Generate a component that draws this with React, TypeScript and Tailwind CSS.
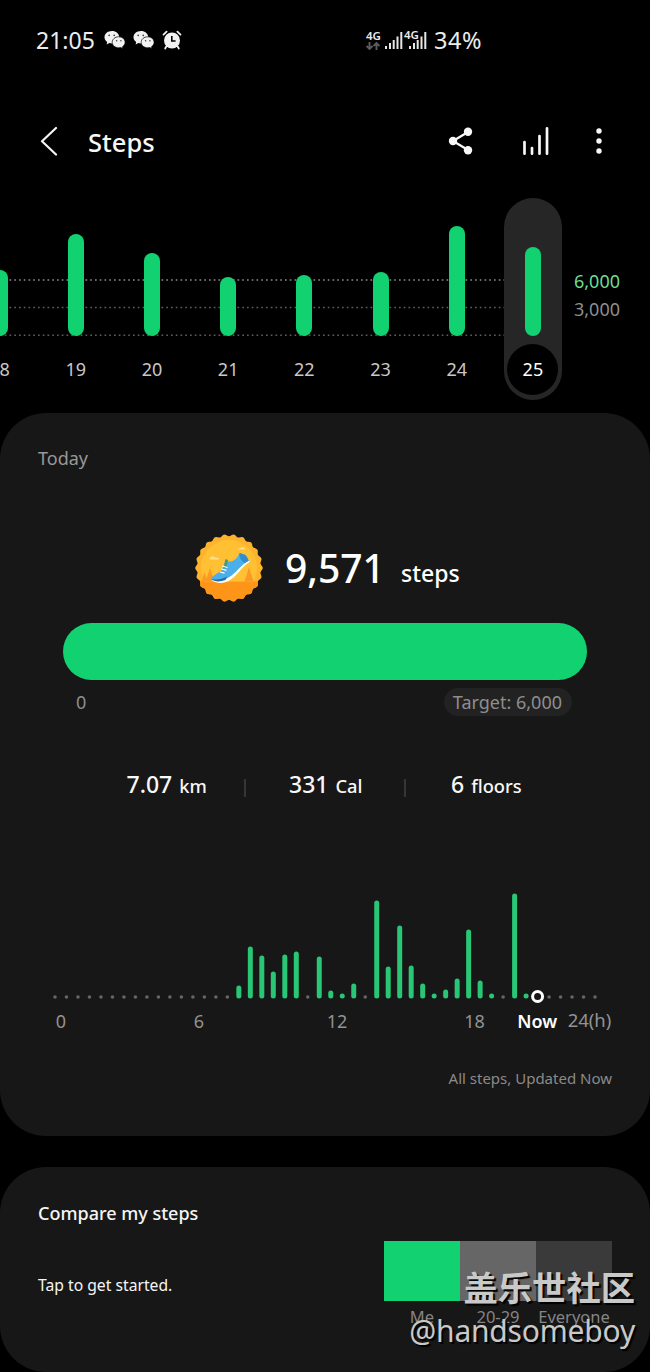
const days = [
  { day: "18", height: 66 },
  { day: "19", height: 102 },
  { day: "20", height: 83 },
  { day: "21", height: 59 },
  { day: "22", height: 61 },
  { day: "23", height: 64 },
  { day: "24", height: 110 },
  { day: "25", height: 89, selected: true },
]

// one value for each half hour, in px of bar height, 0 = no steps
const halfHours = [
  0, 0, 0, 0, 0, 0, 0, 0, 0, 0, 0, 0, 0, 0, 0, 0, 13, 52, 43, 27, 44, 47, 0,
  42, 8, 5, 15, 0, 98, 32, 73, 33, 15, 5, 9, 20, 69, 18, 5, 0, 105, 5, 0, 0, 0,
  0, 0, 0,
]
const NOW = 42

const hourLabels = [
  { text: "0", x: 61 },
  { text: "6", x: 199 },
  { text: "12", x: 337 },
  { text: "18", x: 474.5 },
]

const badgePoints = Array.from({ length: 176 }, (_, i) => {
  const angle = (i / 176) * Math.PI * 2
  const r = 32.8 + Math.cos(angle * 22)
  return `${35 + r * Math.cos(angle)},${35 + r * Math.sin(angle)}`
}).join(" ")

function WeChatIcon() {
  return (
    <svg width="22" height="20" viewBox="0 0 22 20">
      <path
        d="M8 1C3.6 1 .5 3.8.5 7.200c0 2 1.100 3.700 2.700 4.800L2.600 14.400l2.800-1.300c.8.2 1.700.4 2.600.4C12.200 13.500 15.200 10.700 15.200 7.200S12 1 8 1Z"
        fill="#f2f2f2"
      />
      <path
        d="M14.700 6.800c-3.900 0-6.500 2.500-6.500 5.500s2.700 5.500 6.500 5.500c.7 0 1.400-.1 2.100-.3l2.200 1.200-.5-2c1.600-1 2.600-2.600 2.600-4.400 0-3-2.700-5.500-6.400-5.500Z"
        fill="#f2f2f2"
        stroke="#000"
        strokeWidth=".7"
      />
      <g fill="#444">
        <circle cx="5.200" cy="5.300" r=".9" />
        <circle cx="10.200" cy="5.300" r=".9" />
        <circle cx="12.600" cy="10.700" r=".8" />
        <circle cx="16.900" cy="10.700" r=".8" />
      </g>
    </svg>
  )
}

function AlarmIcon() {
  return (
    <svg width="20" height="20" viewBox="0 0 20 20" fill="none">
      <circle cx="10" cy="10.500" r="8" fill="#f2f2f2" />
      <path
        d="M1.500 4.600 4.600 1.700M18.500 4.600 15.400 1.700M4.300 16.500 3.200 18.500M15.700 16.500l1.100 2"
        stroke="#f2f2f2"
        strokeWidth="1.800"
        strokeLinecap="round"
      />
      <path d="M9.800 6v5h3.800" stroke="#000" strokeWidth="1.600" />
    </svg>
  )
}

function Signal() {
  return (
    <svg width="18" height="18" viewBox="0 0 18 18" fill="#e6e6e6">
      <rect x="0" y="14" width="2" height="3" />
      <rect x="4" y="11" width="2" height="6" />
      <rect x="7.700" y="8" width="2" height="9" />
      <rect x="11.500" y="4.500" width="2" height="12.500" />
      <rect x="15.300" y="0" width="2" height="17" />
    </svg>
  )
}

function StatusBar() {
  return (
    <div className="flex h-20 items-center pl-9 text-[23px] text-[#ececec]">
      <span className="w-[68px]">21:05</span>
      <div className="flex w-[262px] gap-[7px]">
        <WeChatIcon />
        <WeChatIcon />
        <AlarmIcon />
      </div>
      <div className="flex w-[19px] flex-col gap-px">
        <span className="text-[11.500px] leading-[10px] font-semibold">4G</span>
        <svg width="14" height="8" viewBox="0 0 14 8" fill="none">
          <path
            d="M3.500 0v7M.5 4l3 3 3-3M10.500 8V1M7.500 4l3-3 3 3"
            stroke="#5c5c5c"
            strokeWidth="1.900"
          />
        </svg>
      </div>
      <div className="pt-0.5">
        <Signal />
      </div>
      <div className="relative ml-[6px] w-[25px] pt-0.5">
        <Signal />
        <span className="absolute -top-[1px] -left-[5px] text-[11.500px] leading-[11px] font-semibold">
          4G
        </span>
      </div>
      <span className="pt-px text-[23.500px] tracking-[0.500px]">34%</span>
    </div>
  )
}

function Header() {
  return (
    <div className="flex h-[118px] items-center pt-1">
      <svg className="ml-10" width="20" height="30" viewBox="0 0 20 30" fill="none">
        <path
          d="M16 2 2 15.200 16 28.500"
          stroke="#f5f5f5"
          strokeWidth="2.200"
          strokeLinecap="round"
          strokeLinejoin="round"
        />
      </svg>
      <h1 className="ml-7 w-[360px] pt-0.5 text-[25.500px] font-medium text-[#f7f7f7]">
        Steps
      </h1>
      <svg width="26" height="28" viewBox="0 0 26 28" fill="#f7f7f7">
        <path d="M20 5 5 14l15 9" fill="none" stroke="#f7f7f7" strokeWidth="2.300" />
        <circle cx="20" cy="4.700" r="4.200" />
        <circle cx="5" cy="14" r="4.200" />
        <circle cx="20" cy="23.200" r="4.200" />
      </svg>
      <svg
        className="ml-12"
        width="28"
        height="30"
        viewBox="0 0 28 30"
        stroke="#f7f7f7"
        strokeWidth="2.700"
        strokeLinecap="round"
      >
        <path d="M2.500 16v11.700M10 22v5.700M17.500 10v17.700M25 2.300v25.400" />
      </svg>
      <svg className="ml-[45px]" width="8" height="28" viewBox="0 0 8 28" fill="#f7f7f7">
        <circle cx="4" cy="4" r="2.700" />
        <circle cx="4" cy="14" r="2.700" />
        <circle cx="4" cy="24" r="2.700" />
      </svg>
    </div>
  )
}

function WeekChart() {
  return (
    <div className="relative flex h-[215px]">
      <svg className="absolute inset-0" width="504" height="215" strokeWidth="1.500">
        <path d="M0 82H504" stroke="#8a8a8a" strokeDasharray="1.700 3.050" />
        <path d="M0 109.500H504" stroke="#5c5c5c" strokeDasharray="1.700 3.050" />
        <path d="M0 137.300H504" stroke="#5c5c5c" strokeDasharray="1.700 3.050" />
      </svg>
      <div className="relative -ml-[38.500px] flex">
        {days.map((d) => (
          <div key={d.day} className="flex w-[76.200px] justify-center">
            <div
              className={`flex h-[202px] w-[58px] flex-col items-center rounded-full ${
                d.selected ? "bg-[#262626]" : ""
              }`}
            >
              <div className="flex h-[137.500px] items-end">
                <div
                  className="w-4 rounded-full bg-[#12d170]"
                  style={{ height: d.height }}
                />
              </div>
              <div
                className={`mt-2 flex size-[51px] items-center justify-center rounded-full text-[18px] ${
                  d.selected ? "bg-black text-white" : "text-[#c8c8c8]"
                }`}
              >
                {d.day}
              </div>
            </div>
          </div>
        ))}
      </div>
      <div className="ml-[3px] flex flex-col pt-[68.500px] text-[18px] leading-7">
        <span className="text-[#6fdc91]">6,000</span>
        <span className="text-[#8e8e8e]">3,000</span>
      </div>
    </div>
  )
}

function Badge() {
  return (
    <svg width="70" height="70" viewBox="0 0 70 70">
      <defs>
        <clipPath id="badge">
          <polygon points={badgePoints} />
        </clipPath>
      </defs>
      <g clipPath="url(#badge)">
        <rect width="70" height="70" fill="#fdb42c" />
        <circle cx="35" cy="35" r="28" fill="#ffc034" />
        <path d="M0 48.500h70V70H0z" fill="#ff9518" />
        <path d="m16 35 4.500 13.500h-9zM10.500 39l3 9.500h-6zM55 34l4.500 14.500h-9z" fill="#fb9a22" />
        <path d="M15.500 26c.5-3 4-3.500 5-1.500l4 .5c1 1 .5 1.500-1 1.500h-7zM43 16.500h8.500c-1.500-3-4-3-5-1.500z" fill="#ffe08a" />
      </g>
      {/* shoe */}
      <path
        d="M17 46.500c3 3.500 11 4.500 16.500 2 8.500-4 14-14.500 22-19.500l-.5-3c-9 4-15 13-23 17.500-5 3-10 3.500-15 3z"
        fill="#fff"
      />
      <path
        d="M17 46c.5-3 6-5 10-8 2.500-3 3-7 4.500-11l3 1.500c5 .5 8.500-2.500 11-8.500l6 2 3.500 5.500c-8 4-12.500 12.500-20.500 17-5 2.700-11 4-17.500 1.500z"
        fill="#4bb0ea"
      />
      <path d="m45.500 20 6 2 3.500 5.500-4 2.500c-3.500-2-6-5-5.500-10Z" fill="#2f8ecb" />
      <path d="m31.500 26 2.500 1-1.500 7-3 2z" fill="#4a9a6b" />
      <path d="M17 46c5 1 11.500.5 16-2.500l-1.500 3.500c-5 2-11.500 2-14.500-1Z" fill="#236ea8" />
      <path d="m28 33 5.500 1.500M27.500 36l5 1.300M26 39l4.500 1.200" stroke="#fff" strokeWidth="1.200" />
    </svg>
  )
}

function Stat({ value, unit }: { value: string; unit: string }) {
  return (
    <div className="flex items-baseline gap-[7px] font-medium text-[#f7f7f7]">
      <span className="text-[23px]">{value}</span>
      <span className="text-[18.300px]">{unit}</span>
    </div>
  )
}

function HourChart() {
  return (
    <svg className="block" width="650" height="160" viewBox="0 0 650 160">
      {halfHours.map((h, i) => {
        const x = 55 + i * 11.490
        if (i === NOW) {
          return (
            <circle key={i} cx={x} cy="116.500" r="5" fill="none" stroke="#fff" strokeWidth="3" />
          )
        }
        if (h === 0) return <circle key={i} cx={x} cy="117" r="1.800" fill="#666" />
        return (
          <rect
            key={i}
            x={x - 2.500}
            y={118.500 - h}
            width="5"
            height={h}
            rx="2.500"
            fill="#29c676"
          />
        )
      })}
      <g textAnchor="middle" fontSize="18" fill="#929292">
        {hourLabels.map((l) => (
          <text key={l.text} x={l.x} y="148">
            {l.text}
          </text>
        ))}
        <text x="589.500" y="147" fontSize="18.500">
          24(h)
        </text>
        <text x="537.300" y="148" fill="#fff" fontWeight="600">
          Now
        </text>
      </g>
    </svg>
  )
}

function TodayCard() {
  return (
    <section className="flex h-[723px] flex-col rounded-[46px] bg-[#171717]">
      <h2 className="pt-[31px] pl-[38px] text-[18px] leading-7 text-[#989898]">
        Today
      </h2>
      <div className="mt-[61px] flex h-[70px] items-center pl-[194px]">
        <Badge />
        <span className="ml-[21px] w-[116px] text-[39px] font-medium text-white">
          9,571
        </span>
        <span className="pt-[11px] text-[23px] font-medium text-white">steps</span>
      </div>
      <div className="mx-[63px] mt-5 h-[57px] rounded-full bg-[#12d170]" />
      <div className="mt-2 flex h-7 items-center justify-between pr-[78px] pl-[76px] text-[18px] text-[#8e8e8e]">
        <span>0</span>
        <span className="rounded-full bg-[#222] pr-[10px] pl-[9px] leading-7">
          Target: 6,000
        </span>
      </div>
      <div className="mt-[50px] flex h-9 items-center pl-[126.500px]">
        <div className="w-[117.500px]">
          <Stat value="7.07" unit="km" />
        </div>
        <i className="mt-2 h-[18px] w-[2px] bg-[#363636]" />
        <div className="w-[158px] pl-[43px]">
          <Stat value="331" unit="Cal" />
        </div>
        <i className="mt-2 h-[18px] w-[2px] bg-[#363636]" />
        <div className="pl-[45px]">
          <Stat value="6" unit="floors" />
        </div>
      </div>
      <div className="mt-[78px]">
        <HourChart />
      </div>
      <p className="mt-[26px] pr-[38px] text-right text-[15px] leading-6 text-[#8a8a8a]">
        All steps, Updated Now
      </p>
    </section>
  )
}

function CompareCard() {
  return (
    <section className="relative mt-[31px] flex h-[205px] justify-between rounded-[46px] bg-[#171717] px-[38px]">
      <div className="text-[#f5f5f5]">
        <h2 className="pt-8 text-[18px] leading-7 font-medium">Compare my steps</h2>
        <p className="mt-11 text-[15.700px] leading-7">Tap to get started.</p>
      </div>
      <div className="grid w-[228px] grid-cols-3 content-start pt-[73.500px] text-center text-[16.500px] leading-6 text-[#858585]">
        <div className="h-[60px] bg-[#12d170]" />
        <div className="h-[60px] bg-[#666]" />
        <div className="h-[60px] bg-[#3a3a3a]" />
        <span className="pt-1">Me</span>
        <span className="pt-1">20-29</span>
        <span className="pt-1">Everyone</span>
      </div>
      <div className="absolute right-[15px] bottom-[20px] text-right text-[#c9c9c9] [text-shadow:2px_2px_1px_#000]">
        <p className="font-['Noto_Sans_CJK_SC',sans-serif] text-[34.300px] leading-[48px] font-bold">
          盖乐世社区
        </p>
        <p className="text-[30px] leading-[42px] tracking-[-0.200px]">@handsomeboy</p>
      </div>
    </section>
  )
}

export default function App() {
  return (
    <main className="h-[1372px] w-[650px] overflow-hidden bg-black font-['Noto_Sans','Noto_Sans_CJK_SC',sans-serif]">
      <StatusBar />
      <Header />
      <WeekChart />
      <TodayCard />
      <CompareCard />
    </main>
  )
}
